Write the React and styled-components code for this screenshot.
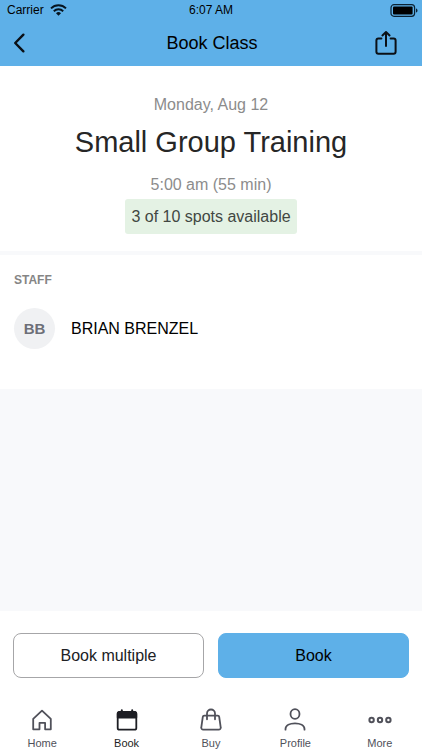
import React from 'react';
import styled, { createGlobalStyle } from 'styled-components';


const GlobalStyle = createGlobalStyle`
    *, *::before, *::after {
        box-sizing: border-box;
    }

    body {
        margin: 0;
        background: #ffffff;
        font-family: "Liberation Sans", Arial, sans-serif;
        color: #000000;
    }

    svg {
        display: block;
    }
`

const Screen = styled.div`
    display: flex;
    flex-direction: column;
    min-height: 100vh;
`

const Header = styled.header`
    background: #5eb0e8;
`

const StatusBar = styled.div`
    display: grid;
    grid-template-columns: 1fr auto 1fr;
    align-items: center;
    height: 20px;
    padding: 0 4px;
    font-size: 12px;
    line-height: 20px;
`

const Carrier = styled.div`
    display: flex;
    align-items: center;
    gap: 6px;
    padding-left: 3px;
`

const Battery = styled.div`
    justify-self: end;
`

const NavBar = styled.div`
    display: grid;
    grid-template-columns: 1fr auto 1fr;
    align-items: center;
    height: 46px;
    padding: 0 24px 0 10px;
`

const NavTitle = styled.h1`
    margin: 0;
    padding-left: 16px;
    font-size: 18px;
    font-weight: 400;
    line-height: 24px;
`

const IconButton = styled.button`
    justify-self: ${props => props.$align || 'start'};
    padding: 0;
    border: none;
    background: none;
    color: #0b1016;
    cursor: pointer;
`

const Content = styled.main`
    display: flex;
    flex: 1;
    flex-direction: column;
    gap: 4px;
    background: #f8f9fb;
`

const Summary = styled.section`
    display: flex;
    flex-direction: column;
    align-items: center;
    padding: 29px 16px 17px;
    background: #ffffff;
`

const SummaryText = styled.p`
    margin: 0;
    color: #8c8c8c;
    font-size: 16px;
    line-height: 20px;
`

const ClassName = styled.h2`
    margin: 9px 0 15px;
    color: #262626;
    font-size: 29px;
    font-weight: 400;
    line-height: 36px;
    text-align: center;
`

const Spots = styled.p`
    margin: 4px 0 0;
    padding: 8px 6px 7px;
    border-radius: 3px;
    background: #e4f2e4;
    color: #414742;
    font-size: 16px;
    line-height: 20px;
`

const Staff = styled.section`
    padding: 16px 14px 40px;
    background: #ffffff;
`

const StaffTitle = styled.h3`
    margin: 0 0 19px;
    color: #858585;
    font-size: 12px;
    line-height: 18px;
`

const StaffRow = styled.div`
    display: flex;
    align-items: center;
    gap: 16px;
    font-size: 16px;
    line-height: 20px;
`

const Avatar = styled.span`
    display: flex;
    align-items: center;
    justify-content: center;
    width: 41px;
    height: 41px;
    border-radius: 50%;
    background: #f0f1f3;
    color: #6d6f78;
    font-size: 15px;
    font-weight: 700;
`

const Actions = styled.div`
    display: grid;
    grid-template-columns: 1fr 1fr;
    gap: 14px;
    padding: 22px 13px 24px;
`

const ActionButton = styled.button`
    height: 45px;
    border: 1px solid ${props => props.$primary ? '#5eb0e8' : '#a6a6a8'};
    border-radius: 8px;
    background: ${props => props.$primary ? '#5eb0e8' : '#ffffff'};
    color: ${props => props.$primary ? '#000000' : '#202124'};
    font-family: inherit;
    font-size: 16px;
    line-height: 20px;
    cursor: pointer;
`

const TabBar = styled.nav`
    display: grid;
    grid-template-columns: repeat(5, 1fr);
    padding: 6px 0 0;
`

const Tab = styled.a`
    display: flex;
    flex-direction: column;
    align-items: center;
    gap: 4px;
    color: ${props => props.$active ? '#1d1e24' : '#50515a'};
    font-size: 11px;
    line-height: 14px;
    text-decoration: none;
`


const WifiIcon = () => (
    <svg width="17" height="12" viewBox="0 0 17 12" fill="none" stroke="#06141f" strokeWidth="1.9" aria-hidden="true">
        <path d="M1 4.4a10.6 10.6 0 0 1 15 0" />
        <path d="M3.8 7.2a6.7 6.7 0 0 1 9.4 0" />
        <path d="M8.5 11.8 6 9.3a3.6 3.6 0 0 1 5 0z" fill="#06141f" stroke="none" />
    </svg>
);

const BatteryIcon = () => (
    <svg width="28" height="13" viewBox="0 0 28 13" aria-hidden="true">
        <rect x="1" y="0.7" width="23.6" height="11.6" rx="3" fill="none" stroke="#0a2233" strokeWidth="1.2" />
        <rect x="3" y="2.6" width="19.6" height="7.8" rx="1" fill="#000000" />
        <path d="M26 4.4c2 .7 2 3.5 0 4.2z" fill="#0a2233" />
    </svg>
);

const BackIcon = () => (
    <svg width="18" height="22" viewBox="0 0 18 22" fill="none" stroke="currentColor" strokeWidth="2.4" strokeLinecap="round" strokeLinejoin="round">
        <path d="M13.4 2.7 5.2 11l8.2 8.3" />
    </svg>
);

const ShareIcon = () => (
    <svg width="24" height="26" viewBox="0 0 24 26" fill="none" stroke="currentColor" strokeWidth="2" strokeLinecap="round" strokeLinejoin="round">
        <path d="M7.4 8.6h-3a2 2 0 0 0-2 2v11.2a2 2 0 0 0 2 2h15.2a2 2 0 0 0 2-2V10.6a2 2 0 0 0-2-2h-3" />
        <path d="M12 16V2.2M8.4 5.4 12 2l3.6 3.4" />
    </svg>
);

const tabIconProps = {
    width: 24,
    height: 24,
    viewBox: '0 0 24 24',
    fill: 'none',
    stroke: 'currentColor',
    strokeWidth: 1.8,
    strokeLinejoin: 'round',
    strokeLinecap: 'round',
    'aria-hidden': true
};

const HomeIcon = () => (
    <svg {...tabIconProps}>
        <path d="M3.2 10.9 12 2.6l8.8 8.3v10.4h-5.7v-6.5H9.5v6.5H3.2z" />
    </svg>
);

const BookIcon = () => (
    <svg {...tabIconProps}>
        <rect x="2.7" y="4" width="18.6" height="17.7" rx="1.8" />
        <path d="M2.7 9.5V5.8A1.8 1.8 0 0 1 4.5 4h15a1.8 1.8 0 0 1 1.8 1.8v3.7z" fill="currentColor" />
        <path d="M6.8 2.3V5M17.2 2.3V5" strokeWidth="2" />
    </svg>
);

const BuyIcon = () => (
    <svg {...tabIconProps}>
        <path d="M5.3 7.6h13.4a1.5 1.5 0 0 1 1.5 1.3l1.5 10.4a2 2 0 0 1-2 2.4H4.3a2 2 0 0 1-2-2.4L3.8 8.9a1.5 1.5 0 0 1 1.5-1.3z" />
        <path d="M8 11.3V5.5a4 4 0 0 1 8 0v5.8" />
    </svg>
);

const ProfileIcon = () => (
    <svg {...tabIconProps}>
        <ellipse cx="12" cy="6" rx="4.5" ry="4.9" />
        <path d="M2.5 21.7v-.7c0-3.6 4.3-5.6 9.5-5.6s9.5 2 9.5 5.6v.7" />
    </svg>
);

const MoreIcon = () => (
    <svg {...tabIconProps} strokeWidth="2">
        <circle cx="3.6" cy="12" r="2.2" />
        <circle cx="12" cy="12" r="2.2" />
        <circle cx="20.4" cy="12" r="2.2" />
    </svg>
);

const tabs = [
    { name: 'Home', Icon: HomeIcon },
    { name: 'Book', Icon: BookIcon },
    { name: 'Buy', Icon: BuyIcon },
    { name: 'Profile', Icon: ProfileIcon },
    { name: 'More', Icon: MoreIcon }
];


const App = () => (
    <Screen>
        <GlobalStyle />
        <Header>
            <StatusBar>
                <Carrier>Carrier <WifiIcon /></Carrier>
                <span>6:07 AM</span>
                <Battery><BatteryIcon /></Battery>
            </StatusBar>
            <NavBar>
                <IconButton type="button" aria-label="Back"><BackIcon /></IconButton>
                <NavTitle>Book Class</NavTitle>
                <IconButton type="button" aria-label="Share" $align="end"><ShareIcon /></IconButton>
            </NavBar>
        </Header>

        <Content>
            <Summary>
                <SummaryText>Monday, Aug 12</SummaryText>
                <ClassName>Small Group Training</ClassName>
                <SummaryText>5:00 am (55 min)</SummaryText>
                <Spots>3 of 10 spots available</Spots>
            </Summary>
            <Staff>
                <StaffTitle>STAFF</StaffTitle>
                <StaffRow>
                    <Avatar aria-hidden="true">BB</Avatar>
                    <span>BRIAN BRENZEL</span>
                </StaffRow>
            </Staff>
        </Content>

        <Actions>
            <ActionButton type="button">Book multiple</ActionButton>
            <ActionButton type="button" $primary>Book</ActionButton>
        </Actions>
        <TabBar>
            {tabs.map(({ name, Icon }) => (
                <Tab key={name} href={`#${name.toLowerCase()}`} $active={name === 'Book'} aria-current={name === 'Book' ? 'page' : undefined}>
                    <Icon />
                    {name}
                </Tab>
            ))}
        </TabBar>
    </Screen>
);


export default App;
